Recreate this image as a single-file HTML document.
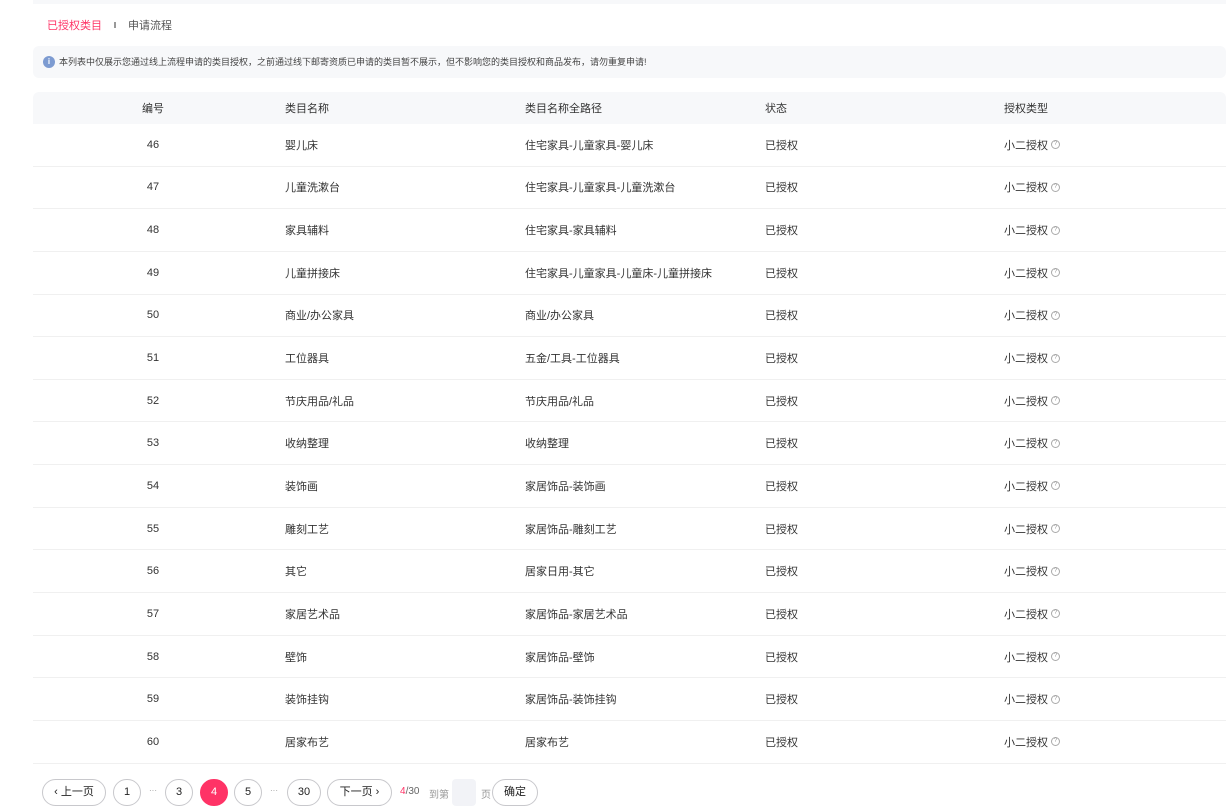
<!DOCTYPE html>
<html><head><meta charset="utf-8"><style>
*{margin:0;padding:0;box-sizing:border-box}
body{width:1226px;height:807px;overflow:hidden;background:#fff;font-family:"Liberation Sans","Noto Sans CJK SC",sans-serif;font-size:11px;color:#333;position:relative}
.top{position:absolute;left:33px;top:0;right:0;height:4px;background:#f7f8fa}
.tabs{position:absolute;left:47px;top:18px;font-size:11px;line-height:16px}
.tabs .a{color:#ff3366}
.tabs .sep{display:inline-block;width:2px;height:6px;background:#999;margin:0 12px 2px 12px;vertical-align:middle}
.tabs .b{color:#555}
.notice{position:absolute;left:33px;top:46px;right:0;height:32px;background:#f7f8fa;border-radius:6px;font-size:9px;color:#444;line-height:32px;padding-left:26px}
.notice i{position:absolute;left:10px;top:10px;width:12px;height:12px;border-radius:50%;background:#7d9bd1;color:#fff;font-style:normal;font-size:8px;line-height:12px;text-align:center;font-weight:bold}
.th{position:absolute;left:33px;right:0;top:92px;height:32px;background:#f7f8fa;border-radius:6px 6px 0 0}
.row{position:absolute;left:33px;right:0;height:42.64px;border-bottom:1px solid #f0f0f0}
.c{position:absolute;top:50%;transform:translateY(-50%);white-space:nowrap;display:flex;align-items:center}
.c1{left:100px;width:40px;justify-content:center}
.c2{left:252px}.c3{left:492px}.c4{left:732px}.c5{left:971px}
.q{display:inline-block;width:9px;height:9px;border:1px solid #aaa;border-radius:50%;font-size:6px;line-height:7px;text-align:center;color:#999;margin-left:3px}
.pg{position:absolute;top:779px;height:27px;border:1px solid #c8c8cc;border-radius:14px;font-size:11px;line-height:25px;text-align:center;color:#222;background:#fff}
.dots{position:absolute;top:786px;color:#999;font-size:8px}
</style></head><body>
<div class="top"></div>
<div class="tabs"><span class="a">已授权类目</span><span class="sep"></span><span class="b">申请流程</span></div>
<div class="notice"><i>i</i>本列表中仅展示您通过线上流程申请的类目授权，之前通过线下邮寄资质已申请的类目暂不展示，但不影响您的类目授权和商品发布，请勿重复申请!</div>
<div class="th"><span class="c c1">编号</span><span class="c c2">类目名称</span><span class="c c3">类目名称全路径</span><span class="c c4">状态</span><span class="c c5">授权类型</span></div>
<div class="row" style="top:124px"><span class="c c1">46</span><span class="c c2">婴儿床</span><span class="c c3">住宅家具-儿童家具-婴儿床</span><span class="c c4">已授权</span><span class="c c5">小二授权<span class="q">?</span></span></div>
<div class="row" style="top:166.6px"><span class="c c1">47</span><span class="c c2">儿童洗漱台</span><span class="c c3">住宅家具-儿童家具-儿童洗漱台</span><span class="c c4">已授权</span><span class="c c5">小二授权<span class="q">?</span></span></div>
<div class="row" style="top:209.3px"><span class="c c1">48</span><span class="c c2">家具辅料</span><span class="c c3">住宅家具-家具辅料</span><span class="c c4">已授权</span><span class="c c5">小二授权<span class="q">?</span></span></div>
<div class="row" style="top:251.9px"><span class="c c1">49</span><span class="c c2">儿童拼接床</span><span class="c c3">住宅家具-儿童家具-儿童床-儿童拼接床</span><span class="c c4">已授权</span><span class="c c5">小二授权<span class="q">?</span></span></div>
<div class="row" style="top:294.6px"><span class="c c1">50</span><span class="c c2">商业/办公家具</span><span class="c c3">商业/办公家具</span><span class="c c4">已授权</span><span class="c c5">小二授权<span class="q">?</span></span></div>
<div class="row" style="top:337.2px"><span class="c c1">51</span><span class="c c2">工位器具</span><span class="c c3">五金/工具-工位器具</span><span class="c c4">已授权</span><span class="c c5">小二授权<span class="q">?</span></span></div>
<div class="row" style="top:379.8px"><span class="c c1">52</span><span class="c c2">节庆用品/礼品</span><span class="c c3">节庆用品/礼品</span><span class="c c4">已授权</span><span class="c c5">小二授权<span class="q">?</span></span></div>
<div class="row" style="top:422.5px"><span class="c c1">53</span><span class="c c2">收纳整理</span><span class="c c3">收纳整理</span><span class="c c4">已授权</span><span class="c c5">小二授权<span class="q">?</span></span></div>
<div class="row" style="top:465.1px"><span class="c c1">54</span><span class="c c2">装饰画</span><span class="c c3">家居饰品-装饰画</span><span class="c c4">已授权</span><span class="c c5">小二授权<span class="q">?</span></span></div>
<div class="row" style="top:507.8px"><span class="c c1">55</span><span class="c c2">雕刻工艺</span><span class="c c3">家居饰品-雕刻工艺</span><span class="c c4">已授权</span><span class="c c5">小二授权<span class="q">?</span></span></div>
<div class="row" style="top:550.4px"><span class="c c1">56</span><span class="c c2">其它</span><span class="c c3">居家日用-其它</span><span class="c c4">已授权</span><span class="c c5">小二授权<span class="q">?</span></span></div>
<div class="row" style="top:593px"><span class="c c1">57</span><span class="c c2">家居艺术品</span><span class="c c3">家居饰品-家居艺术品</span><span class="c c4">已授权</span><span class="c c5">小二授权<span class="q">?</span></span></div>
<div class="row" style="top:635.7px"><span class="c c1">58</span><span class="c c2">壁饰</span><span class="c c3">家居饰品-壁饰</span><span class="c c4">已授权</span><span class="c c5">小二授权<span class="q">?</span></span></div>
<div class="row" style="top:678.3px"><span class="c c1">59</span><span class="c c2">装饰挂钩</span><span class="c c3">家居饰品-装饰挂钩</span><span class="c c4">已授权</span><span class="c c5">小二授权<span class="q">?</span></span></div>
<div class="row" style="top:721px"><span class="c c1">60</span><span class="c c2">居家布艺</span><span class="c c3">居家布艺</span><span class="c c4">已授权</span><span class="c c5">小二授权<span class="q">?</span></span></div>
<div class="pg" style="left:42px;width:64px">‹ 上一页</div>
<div class="pg" style="left:113px;width:28px">1</div>
<span class="dots" style="left:149px">···</span>
<div class="pg" style="left:165px;width:28px">3</div>
<div class="pg" style="left:200px;width:28px;background:#ff3366;border-color:#ff3366;color:#fff">4</div>
<div class="pg" style="left:234px;width:28px">5</div>
<span class="dots" style="left:270px">···</span>
<div class="pg" style="left:287px;width:34px">30</div>
<div class="pg" style="left:327px;width:65px">下一页 ›</div>
<span style="position:absolute;left:400px;top:786px;font-size:10px;color:#666"><span style="color:#ff3366">4</span>/30</span>
<span style="position:absolute;left:429px;top:786px;font-size:10px;color:#999">到第</span>
<div style="position:absolute;left:452px;top:779px;width:24px;height:27px;background:#f2f3f7;border-radius:4px"></div>
<span style="position:absolute;left:481px;top:786px;font-size:10px;color:#999">页</span>
<div class="pg" style="left:492px;width:46px">确定</div>
</body></html>
